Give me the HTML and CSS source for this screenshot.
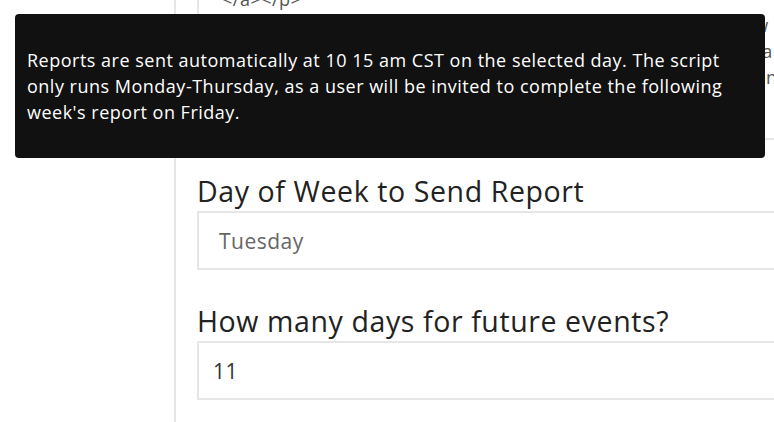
FILE: index.html
```html
<!DOCTYPE html>
<html lang="en">
<head>
<meta charset="utf-8">
<title>Report settings</title>
<link rel="stylesheet" href="styles.css">
</head>
<body>
<div class="page">
  <aside class="sidebar"></aside>
  <main class="main">
    <div class="textarea">
      <div class="ta-line">&lt;/a&gt;&lt;/p&gt;</div>
      <div class="ta-line">&lt;p&gt;Please review the upcoming events below and let us know if anything needs to be updated before we send them out</div>
      <div class="ta-line">&lt;p&gt;Thank you for keeping the calendar accurate. If you have any questions, contact the district office</div>
      <div class="ta-line">&lt;p&gt;This message was generated by the weekly report script and sent to every team member</div>
      <div class="ta-line">&nbsp;</div>
    </div>

    <div class="field">
      <label class="field-label">Day of Week to Send Report</label>
      <div class="control select">Tuesday</div>
    </div>

    <div class="field">
      <label class="field-label">How many days for future events?</label>
      <div class="control input">11</div>
    </div>
  </main>
</div>

<div class="tooltip">Reports are sent automatically at 10 15 am CST on the selected day. The script<br>only runs Monday-Thursday, as a user will be invited to complete the following<br>week's report on Friday.</div>
</body>
</html>
```

FILE: styles.css
```css
html, body {
  margin: 0;
  padding: 0;
  background: #fff;
  overflow: hidden;
}

body {
  font-family: "Open Sans", "DejaVu Sans", sans-serif;
  color: #222;
  width: 774px;
  height: 422px;
}

.page {
  display: flex;
  height: 422px;
}

.sidebar {
  width: 174px;
  flex: 0 0 174px;
  border-right: 2px solid #e6e6e6;
}

.main {
  flex: 0 0 760px;
  padding-left: 21px;
  margin-top: -28px;
  display: flex;
  flex-direction: column;
}

.textarea {
  border: 2px solid #e6e6e6;
  padding: 12px 20px 22px 23px;
  font-size: 18px;
  line-height: 26px;
  color: #555;
  letter-spacing: 0.5px;
  white-space: nowrap;
  overflow: hidden;
}

.field {
  margin-top: 35px;
  display: flex;
  flex-direction: column;
}

.field-label {
  font-size: 28.5px;
  line-height: 32px;
  letter-spacing: 0.6px;
  color: #222;
  margin-bottom: 4px;
}

.control {
  height: 55px;
  border: 2px solid #e6e6e6;
  display: flex;
  align-items: center;
  font-size: 21px;
  letter-spacing: 0.5px;
}

.select {
  padding-left: 20px;
  color: #666;
}

.input {
  padding-left: 14px;
  color: #333;
}

.tooltip {
  position: absolute;
  left: 15px;
  top: 14px;
  width: 726px;
  padding: 33px 12px;
  background: #111;
  color: #fff;
  border-radius: 4px;
  font-size: 18px;
  line-height: 26px;
  letter-spacing: 0.5px;
  white-space: nowrap;
}
```
